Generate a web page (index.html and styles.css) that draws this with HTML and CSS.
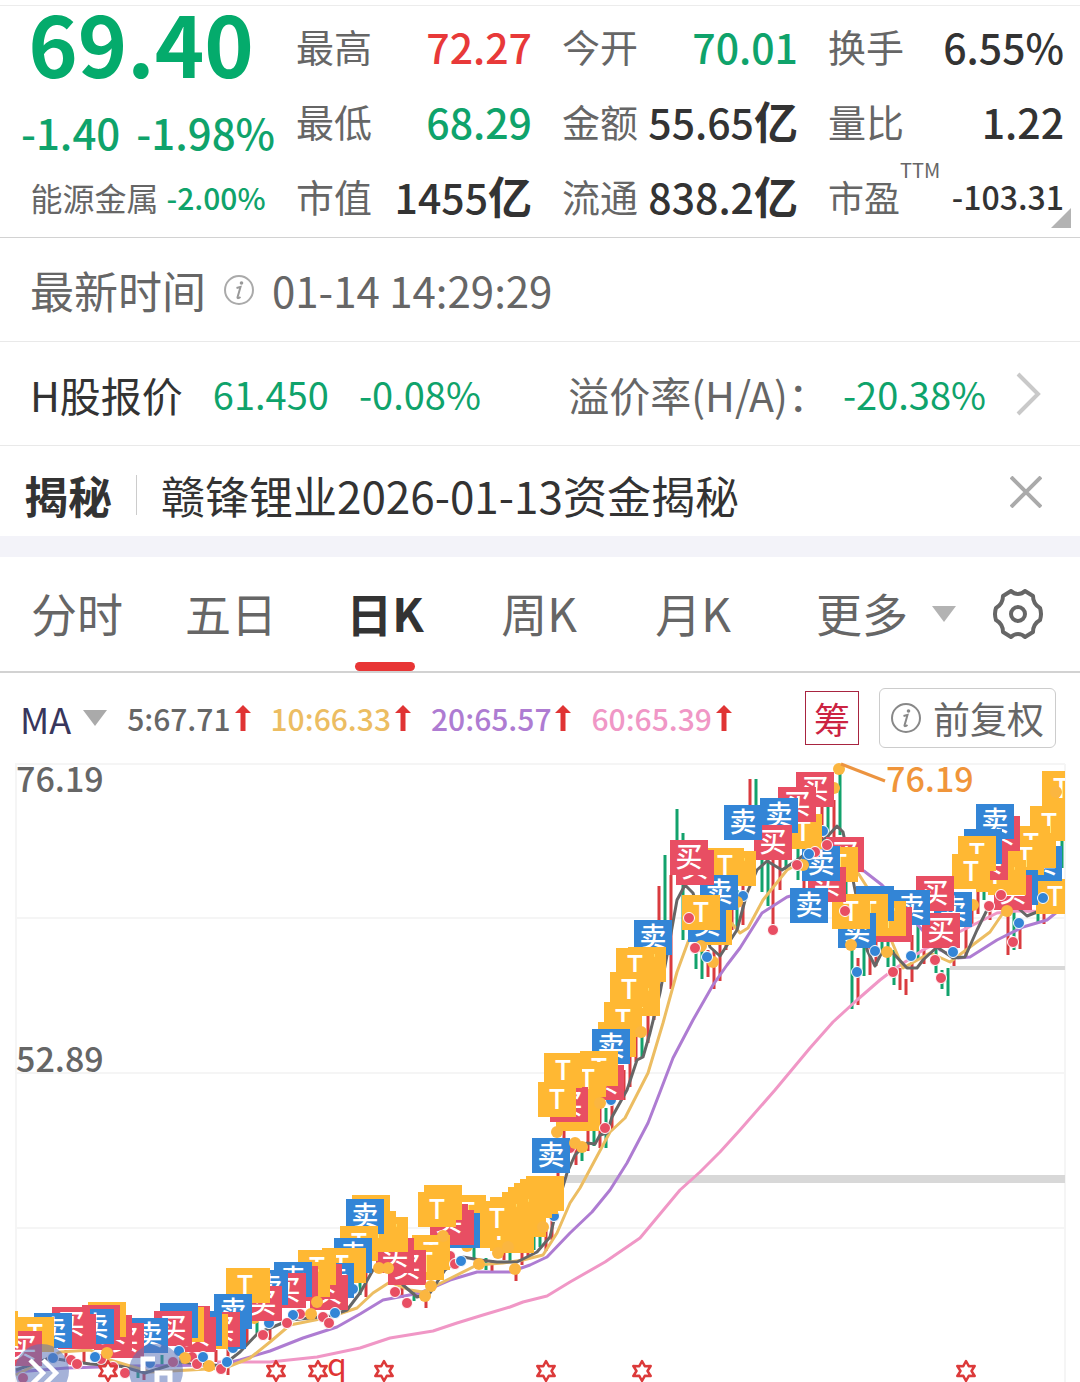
FILE: index.html
```html
<!DOCTYPE html>
<html lang="zh-CN">
<head>
<meta charset="utf-8">
<meta name="viewport" content="width=device-width, initial-scale=1">
<title>赣锋锂业</title>
<link rel="stylesheet" href="styles.css">
</head>
<body>
<header class="quote">
  <div class="quote-main">
    <div class="price">69.40</div>
    <div class="change"><span>-1.40</span><span>-1.98%</span></div>
    <div class="sector"><span>能源金属</span><span class="sector-change">-2.00%</span></div>
  </div>
  <dl class="stats">
    <div class="stat"><dt>最高</dt><dd class="up">72.27</dd></div>
    <div class="stat"><dt>今开</dt><dd class="down">70.01</dd></div>
    <div class="stat"><dt>换手</dt><dd>6.55%</dd></div>
    <div class="stat"><dt>最低</dt><dd class="down">68.29</dd></div>
    <div class="stat"><dt>金额</dt><dd>55.65<b>亿</b></dd></div>
    <div class="stat"><dt>量比</dt><dd>1.22</dd></div>
    <div class="stat"><dt>市值</dt><dd>1455<b>亿</b></dd></div>
    <div class="stat"><dt>流通</dt><dd>838.2<b>亿</b></dd></div>
    <div class="stat"><dt class="narrow">市盈<sup>TTM</sup></dt><dd class="small">-103.31</dd></div>
  </dl>
  <svg class="corner" viewBox="0 0 20 20" aria-hidden="true"><path d="M20 0V20H0z" fill="#b3b3b3"/></svg>
</header>

<section class="row time-row">
  <span>最新时间</span>
  <svg class="info" viewBox="0 0 30 30" aria-hidden="true"><circle cx="15" cy="15" r="14" fill="none" stroke="#aaa" stroke-width="2"/><circle cx="17.500" cy="8" r="1.800" fill="#999"/><path d="M12.500 13l4-1-3 10.500q0 1.500 3-.5" fill="none" stroke="#999" stroke-width="2"/></svg>
  <time>01-14 14:29:29</time>
</section>

<a class="row hshare" href="#hshare">
  <span class="hshare-name">H股报价</span>
  <span class="down">61.450</span>
  <span class="down hshare-change">-0.08%</span>
  <span class="premium">溢价率(H/A)：</span>
  <span class="down premium-value">-20.38%</span>
  <svg class="chevron" viewBox="0 0 26 44" aria-hidden="true"><path d="M2 2l20 20L2 42" fill="none" stroke="#c9c9c9" stroke-width="4"/></svg>
</a>

<section class="row news">
  <strong>揭秘</strong>
  <a href="#news">赣锋锂业2026-01-13资金揭秘</a>
  <button class="close" aria-label="关闭"><svg viewBox="0 0 32 32" aria-hidden="true"><path d="M1 1l30 30M31 1L1 31" stroke="#aaa" stroke-width="4"/></svg></button>
</section>

<nav class="tabs">
  <button>分时</button>
  <button>五日</button>
  <button class="active">日K</button>
  <button>周K</button>
  <button>月K</button>
  <button class="more">更多<svg class="tri" viewBox="0 0 24 16" aria-hidden="true"><path d="M0 0H24L12 16z" fill="#b3b3b3"/></svg></button>
  <button class="settings" aria-label="设置">
    <svg viewBox="0 0 50 50" aria-hidden="true"><g fill="none" stroke="#666" stroke-width="4" stroke-linejoin="round"><path d="M18 2Q21 5 25 5T32 2L40 7Q40 15 47 19Q49 25 47 31Q40 35 40 43L32 48Q29 45 25 45T18 48L10 43Q10 35 3 31Q1 25 3 19Q10 15 10 7z"/><circle cx="25" cy="25" r="7"/></g></svg>
  </button>
</nav>

<section class="indicators">
  <button class="ma">MA<svg class="tri" viewBox="0 0 24 16" aria-hidden="true"><path d="M0 0H24L12 16z" fill="#aaa"/></svg></button>
  <span class="line ma5">5:67.71<svg viewBox="0 0 16 26" aria-hidden="true"><path d="M8 0l8 8h-5.500v18h-5V8H0z"/></svg></span>
  <span class="line ma10">10:66.33<svg viewBox="0 0 16 26" aria-hidden="true"><path d="M8 0l8 8h-5.500v18h-5V8H0z"/></svg></span>
  <span class="line ma20">20:65.57<svg viewBox="0 0 16 26" aria-hidden="true"><path d="M8 0l8 8h-5.500v18h-5V8H0z"/></svg></span>
  <span class="line ma60">60:65.39<svg viewBox="0 0 16 26" aria-hidden="true"><path d="M8 0l8 8h-5.500v18h-5V8H0z"/></svg></span>
  <button class="chips">筹</button>
  <button class="adjust"><svg class="info" viewBox="0 0 30 30" aria-hidden="true"><circle cx="15" cy="15" r="14" fill="none" stroke="#888" stroke-width="2"/><circle cx="17.500" cy="8" r="1.800" fill="#888"/><path d="M12.500 13l4-1-3 10.500q0 1.500 3-.5" fill="none" stroke="#888" stroke-width="2"/></svg>前复权</button>
</section>

<svg class="chart" id="chart" viewBox="0 756 1080 626" role="img" aria-label="日K线图"></svg>
<script src="chart.js"></script>
</body>
</html>
```
FILE: styles.css
```css
* { box-sizing: border-box; }
body {
  margin: 0;
  padding-top: 5px;
  background: #fff;
  color: #333;
  font-family: "Noto Sans CJK SC", sans-serif;
  overflow-x: hidden;
}
button {
  margin: 0;
  padding: 0;
  border: 0;
  background: none;
  color: inherit;
  font: inherit;
}
a { color: inherit; text-decoration: none; }
svg { display: block; flex: none; }
.up { color: #e83939; }
.down { color: #0fa36b; }

.quote {
  position: relative;
  display: grid;
  grid-template-columns: 296fr 784fr;
  border-top: 1px solid #ececec;
  border-bottom: 1px solid #d2d2d2;
}
.quote-main {
  display: flex;
  flex-direction: column;
  align-items: center;
  color: #0fa36b;
  white-space: nowrap;
}
.price { font-size: 84px; font-weight: 700; line-height: 72px; color: #04ab6c; margin-right: 14px; }
.change { display: flex; gap: 16px; margin-top: 24px; font-size: 42px; font-weight: 500; line-height: 60px; }
.sector { display: flex; gap: 8px; margin-top: 12px; font-size: 32px; line-height: 46px; color: #666; }
.sector-change { font-size: 30px; font-weight: 500; color: #0fa36b; }

.stats {
  display: grid;
  grid-template-columns: repeat(3, 1fr);
  column-gap: 30px;
  margin: 0;
  padding: 2px 16px 4px 0;
}
.stat { display: flex; align-items: center; justify-content: space-between; height: 75px; white-space: nowrap; }
.stat dt { display: flex; font-size: 38px; line-height: 50px; color: #666; }
.stat dt.narrow { font-size: 36px; }
.stat dd { margin: 0; font-size: 41px; font-weight: 500; line-height: 60px; }
.stat dd b { font-size: 44px; font-weight: 700; line-height: 60px; }
.stat dd.small { font-size: 32px; }
.stat sup { align-self: flex-start; margin-top: -16px; font-size: 20px; line-height: 30px; }
.corner { position: absolute; right: 9px; bottom: 9px; width: 20px; height: 20px; }

.row { display: flex; align-items: center; border-bottom: 1px solid #e9e9e9; white-space: nowrap; }
.info { width: 30px; height: 30px; }
.time-row { height: 104px; padding: 0 30px; gap: 18px; font-size: 44px; color: #666; }
.time-row time { font-size: 42px; }
.hshare { height: 104px; padding: 0 38px 0 30px; font-size: 38px; }
.hshare-name { margin-right: 30px; font-size: 41px; }
.hshare-change { margin-left: 30px; }
.premium { margin-left: auto; font-size: 41px; color: #666; }
.premium-value { margin: 0 30px 0 14px; }
.chevron { width: 26px; height: 44px; }
.news { height: 111px; padding: 8px 38px 0 24px; border-bottom: 21px solid #f3f3f9; font-size: 44px; }
.news strong { padding-right: 24px; border-right: 1px solid #ccc; line-height: 40px; }
.news a { margin-left: 24px; }
.close { margin: 0 0 6px auto; }
.close svg { width: 32px; height: 32px; }

.tabs {
  display: grid;
  grid-template-columns: repeat(5, 154fr) 216fr 94fr;
  height: 116px;
  border-bottom: 2px solid #d2d2d2;
  font-size: 46px;
  color: #666;
}
.tabs button { padding-bottom: 4px; }
.tabs .active { position: relative; color: #333; font-weight: 700; }
.tabs .active::after {
  content: "";
  position: absolute;
  left: 50%;
  bottom: 0;
  width: 60px;
  height: 9px;
  margin-left: -30px;
  border-radius: 5px;
  background: #e83535;
}
.tri { width: 24px; height: 16px; }
.tabs .more { display: flex; align-items: center; gap: 24px; padding-left: 46px; }
.more .tri { margin-top: 4px; }
.tabs .settings { padding: 0 0 0 7px; }
.settings svg { width: 50px; height: 50px; }

.indicators { display: flex; align-items: center; gap: 20px; height: 83px; padding: 6px 24px 0 20px; font-size: 30px; line-height: 44px; white-space: nowrap; }
.ma { display: flex; align-items: center; gap: 12px; font-size: 36px; color: #38365c; }
.line { display: flex; align-items: center; gap: 4px; font-weight: 500; }
.line svg { width: 16px; height: 26px; fill: #e03434; }
.ma5 { color: #666; }
.ma10 { color: #ecbd62; }
.ma20 { color: #ae7cd2; }
.ma60 { color: #f097c6; }
.chips { width: 54px; height: 54px; margin-left: auto; border: 1px solid #a82440; color: #cc2342; font-size: 36px; }
.adjust { display: flex; align-items: center; justify-content: center; gap: 12px; width: 177px; height: 60px; border: 1px solid #ccc; border-radius: 6px; color: #666; font-size: 37px; }

.chart { width: 100%; height: auto; }
.chart text { font-family: "Noto Sans CJK SC", sans-serif; }
.axis-label { font-size: 34px; fill: #666; font-weight: 500; }
.peak-label { font-size: 34px; fill: #f0953a; font-weight: 500; }
.tag-label { font-size: 27px; fill: #fff; text-anchor: middle; font-weight: 500; }
.event-label { font-size: 32px; fill: #e03434; }
```
FILE: chart.js
```js
const svg = document.getElementById('chart');
const NS = 'http://www.w3.org/2000/svg';
function add(name, attrs, parent = svg, text) {
  const el = document.createElementNS(NS, name);
  for (const key in attrs) el.setAttribute(key, attrs[key]);
  if (text) el.textContent = text;
  parent.appendChild(el);
  return el;
}
const COLORS = { R: '#e84e63', B: '#3385d6', Y: '#ffb833', r: '#d93b3f', g: '#12a26c' };
const LABELS = { R: '买', B: '卖', Y: 'T' };

const clip = add('clipPath', { id: 'plot' });
add('rect', { x: 15, y: 756, width: 1050, height: 626 }, clip);

/* grid */
for (const y of [764, 918, 1073, 1228]) add('path', { d: `M15 ${y}H1065`, stroke: '#f5f5f5', 'stroke-width': 2 });
for (const x of [16, 1065]) add('path', { d: `M${x} 764V1382`, stroke: '#f5f5f5', 'stroke-width': 2 });
add('rect', { x: 565, y: 1175, width: 500, height: 8, fill: '#d8d8d8' });
add('rect', { x: 950, y: 966, width: 115, height: 4, fill: '#d8d8d8' });

const plot = add('g', { 'clip-path': 'url(#plot)' });

/* candles: x, high, low, direction */
const candles = [
  [659,886,930,'r'],[665,855,930,'g'],[671,875,989,'r'],[677,809,850,'g'],[683,833,940,'g'],[696,945,969,'g'],[702,945,979,'g'],[708,950,977,'r'],[714,950,989,'r'],[720,940,981,'r'],[726,930,950,'r'],
  [732,900,930,'r'],[737,890,930,'g'],[743,880,925,'r'],[750,779,830,'r'],[756,779,830,'g'],[762,860,892,'g'],[768,860,906,'g'],[773,860,926,'r'],[780,860,890,'r'],[786,850,870,'g'],[798,840,880,'g'],[804,840,888,'r'],
  [822,790,840,'r'],[828,800,840,'g'],[834,800,840,'r'],[840,770,835,'g'],[846,870,910,'g'],[852,945,1009,'g'],[858,958,1005,'r'],[864,940,976,'g'],[870,940,975,'r'],[876,940,966,'r'],[882,940,952,'g'],
  [888,940,967,'g'],[894,950,985,'g'],[900,968,990,'r'],[906,979,995,'r'],[912,935,982,'r'],[918,925,960,'g'],[924,950,964,'r'],[936,947,973,'g'],[942,970,989,'g'],[948,968,996,'g'],[954,948,966,'r'],
  [966,920,957,'r'],[972,900,925,'r'],[978,890,914,'r'],[984,888,900,'g'],[990,910,920,'r'],[1008,912,955,'r'],[1014,910,950,'g'],[1020,925,949,'r'],[1038,910,922,'g'],[1044,910,924,'r'],[1062,840,868,'g'],
  [654,990,1020,'r'],[648,1010,1043,'r'],[642,1030,1057,'g'],[636,1030,1062,'r'],[630,1055,1087,'r'],[624,1070,1100,'r'],[612,1105,1130,'r'],[606,1108,1148,'g'],[600,1108,1148,'r'],[594,1125,1146,'g'],[588,1125,1151,'r'],[582,1150,1161,'g'],[576,1148,1165,'r'],[564,1130,1140,'r'],
  [558,1170,1180,'r'],[552,1210,1240,'r'],[546,1225,1251,'r'],[540,1230,1247,'g'],[534,1232,1250,'g'],[528,1240,1257,'r'],[522,1250,1265,'r'],[516,1270,1281,'r'],[510,1250,1262,'g'],[504,1250,1260,'r'],[492,1260,1271,'r'],[486,1258,1270,'g'],[474,1245,1258,'g'],
  [426,1296,1308,'r'],[414,1290,1301,'g'],[402,1288,1298,'r'],[366,1270,1297,'r'],[360,1275,1295,'g'],[270,1320,1340,'r'],[257,1322,1333,'g'],[247,1325,1345,'r'],[228,1345,1375,'r'],[216,1350,1362,'r'],[198,1355,1366,'g'],[162,1355,1368,'g'],[144,1362,1380,'r'],[138,1365,1378,'g'],[84,1350,1364,'r'],[66,1350,1362,'r']
];
for (const [x, y1, y2, c] of candles) add('rect', { x: x - 1.5, y: y1, width: 3, height: y2 - y1, fill: COLORS[c] }, plot);

/* moving averages */
const averages = {
  '#f097c6': '217,1362 270,1362 317,1357 360,1348 390,1338 433,1331 457,1323 483,1315 510,1307 523,1302 547,1296 570,1282 605,1262 640,1238 660,1214 680,1190 700,1172 720,1152 740,1130 775,1090 810,1048 833,1022 857,1000 880,980 893,970 923,950 963,930 997,913 1017,911 1065,912',
  '#ae7cd2': '16,1372 67,1368 133,1366 217,1365 240,1360 270,1351 303,1338 337,1327 360,1314 383,1300 420,1293 450,1280 477,1272 510,1272 530,1265 547,1257 570,1233 592,1212 610,1190 627,1163 648,1123 660,1092 673,1058 693,1020 713,985 727,965 740,948 762,913 787,897 820,888 845,868 864,871 882,885 900,905 940,950 958,958 970,957 997,940 1023,927 1047,920 1057,912',
  '#ecbd62': '16,1375 60,1352 90,1350 110,1360 150,1372 190,1370 225,1368 250,1358 270,1342 290,1325 330,1317 357,1308 373,1293 390,1282 410,1290 423,1292 447,1280 477,1265 503,1263 523,1260 543,1255 557,1233 570,1203 580,1188 610,1132 625,1118 648,1073 663,1023 677,972 688,942 705,910 720,910 740,933 748,928 763,900 787,870 800,863 830,848 858,873 867,887 892,942 903,968 930,953 950,962 970,947 990,932 1003,913 1030,895',
  '#666': '16,1370 50,1358 90,1364 120,1366 145,1373 180,1362 222,1366 240,1352 258,1333 290,1320 330,1316 347,1310 360,1293 373,1270 385,1268 403,1285 417,1297 430,1293 445,1270 463,1257 480,1260 497,1262 517,1262 537,1252 550,1237 558,1203 567,1173 575,1155 587,1143 595,1144 600,1135 607,1133 612,1117 627,1090 637,1060 643,1057 650,1033 660,993 668,950 677,900 685,885 693,893 710,947 720,956 737,930 747,893 757,870 767,861 782,870 800,858 820,843 827,837 837,826 843,832 853,880 867,950 875,966 883,950 892,952 907,968 917,968 923,960 937,947 953,958 965,957 977,930 987,910 1005,900 1018,908 1027,916 1037,912 1062,890'
};
for (const color in averages) add('polyline', { points: averages[color], fill: 'none', stroke: color, 'stroke-width': 3, 'stroke-linejoin': 'round' }, plot);

function dots(list) {
  for (const [x, y, c] of list) {
    add('circle', c === 'Y' ? { cx: x, cy: y, r: 6, fill: '#fbb640' } : { cx: x, cy: y, r: 5.5, fill: COLORS[c], stroke: '#fff', 'stroke-width': 1 }, plot);
  }
}

/* signals partly hidden by the tags */
dots([[233,1348,'B'],[269,1323,'B'],[353,1289,'B'],[450,1256,'R'],[570,1148,'R'],[611,1100,'B'],[823,831,'B'],[834,788,'Y'],[743,896,'B'],[737,902,'Y'],[973,905,'Y'],[192,1357,'R'],[554,1216,'B'],[467,1246,'Y'],[254,1318,'Y']]);

/* trade tags: x, y, kind; the earlier day lies over the later one */
const tags = [
  [-20,1311,'Y'],[4,1331,'R'],[16,1317,'Y'],[34,1313,'B'],[52,1307,'R'],[58,1314,'R'],[76,1309,'B'],[82,1305,'R'],[88,1302,'Y'],[94,1315,'R'],[106,1323,'R'],[130,1318,'B'],
  [154,1311,'R'],[160,1303,'B'],[166,1307,'Y'],[172,1306,'R'],[178,1317,'R'],[184,1311,'B'],[190,1314,'Y'],[202,1312,'R'],[208,1314,'B'],[214,1294,'B'],[226,1268,'Y'],[232,1268,'Y'],
  [244,1286,'R'],[250,1270,'B'],[268,1273,'R'],[274,1262,'B'],[280,1266,'R'],[292,1262,'Y'],[298,1250,'Y'],[304,1264,'R'],[310,1275,'R'],[316,1263,'B'],[322,1248,'Y'],[328,1248,'Y'],[334,1238,'B'],[340,1226,'Y'],
  [346,1199,'B'],[352,1195,'Y'],[358,1211,'Y'],[370,1217,'Y'],[376,1238,'R'],[388,1250,'R'],[406,1245,'Y'],[412,1235,'Y'],[418,1192,'Y'],[424,1185,'Y'],[430,1204,'R'],[436,1210,'R'],[442,1213,'B'],[448,1195,'Y'],
  [478,1201,'Y'],[480,1213,'Y'],[490,1197,'Y'],[496,1218,'Y'],[490,1216,'Y'],[502,1192,'Y'],[508,1187,'Y'],[508,1202,'Y'],[514,1183,'Y'],[520,1179,'Y'],[526,1176,'Y'],
  [532,1138,'B'],[538,1082,'Y'],[544,1053,'Y'],[550,1087,'R'],[556,1096,'Y'],[562,1096,'Y'],[568,1062,'Y'],[580,1051,'Y'],[586,1065,'R'],[592,1029,'B'],[598,1022,'Y'],[604,1002,'Y'],[610,972,'Y'],[616,948,'Y'],[622,981,'Y'],[628,947,'Y'],[634,920,'B'],
  [670,840,'R'],[676,850,'R'],[682,895,'Y'],[688,907,'B'],[694,910,'Y'],[700,875,'B'],[706,848,'Y'],[718,851,'Y'],[724,805,'B'],[754,825,'R'],[760,798,'B'],[778,787,'R'],[784,814,'Y'],[796,772,'R'],
  [790,888,'B'],[802,846,'B'],[808,867,'R'],[820,847,'Y'],[826,837,'R'],[832,894,'Y'],[838,913,'B'],[850,894,'Y'],[856,886,'B'],[868,901,'Y'],[874,907,'R'],[892,890,'B'],[916,876,'R'],[922,913,'R'],[934,892,'B'],
  [952,854,'Y'],[958,836,'Y'],[964,829,'B'],[970,845,'R'],[976,804,'B'],[982,816,'R'],[976,857,'Y'],[988,860,'Y'],[994,875,'R'],[1000,870,'B'],[1006,840,'Y'],[1012,826,'Y'],[1018,833,'Y'],[1024,846,'B'],[1030,806,'Y'],[1036,879,'Y'],[1042,771,'Y']
];
tags.sort((a, b) => b[0] - a[0]);

/* a label is dropped when one later tag covers nearly all of it */
function covered(i) {
  const [x, y] = tags[i];
  if (x < 0) return true;
  return tags.slice(i + 1).some(([u, v]) => {
    const w = Math.min(x + 31, u + 38) - Math.max(x + 7, u);
    const h = Math.min(y + 30, v + 35) - Math.max(y + 4, v);
    return w > 0 && h > 0 && w * h > 24 * 26 * 0.83;
  });
}
tags.forEach(([x, y, kind], i) => {
  add('rect', { x, y, width: 38, height: 35, fill: COLORS[kind] }, plot);
  if (!covered(i)) add('text', { x: x + 19, y: y + 27, class: 'tag-label' }, plot, LABELS[kind]);
});

dots([[53,1358,'B'],[71,1360,'R'],[77,1364,'R'],[101,1359,'R'],[95,1357,'B'],[107,1353,'Y'],[113,1367,'R'],[125,1373,'R'],[150,1363,'B'],[173,1362,'R'],[179,1351,'B'],[185,1358,'Y'],[197,1364,'R'],[203,1357,'B'],[209,1366,'Y'],[221,1369,'R'],[227,1362,'B'],[263,1335,'R'],[23,1378,'R'],
  [300,1314,'R'],[293,1315,'B'],[287,1323,'R'],[311,1314,'Y'],[323,1317,'R'],[329,1323,'R'],[335,1313,'B'],[317,1302,'Y'],[379,1268,'Y'],[388,1268,'Y'],[395,1292,'R'],[407,1303,'R'],[431,1286,'Y'],[425,1296,'Y'],[455,1264,'R'],[461,1261,'B'],[443,1236,'Y'],[479,1264,'Y'],[515,1269,'Y'],[498,1253,'Y'],[508,1247,'Y'],[543,1227,'Y'],
  [557,1132,'Y'],[575,1143,'Y'],[582,1147,'Y'],[605,1128,'R'],[600,1103,'Y'],[641,1032,'Y'],[689,918,'R'],[701,946,'Y'],[695,948,'R'],[713,962,'Y'],[707,957,'B'],[773,930,'R'],[803,865,'Y'],[797,865,'R'],[815,852,'R'],[809,854,'B'],[827,845,'R'],[839,769,'Y'],[845,911,'R'],[851,945,'Y'],[857,972,'B'],[875,951,'B'],
  [887,952,'Y'],[911,956,'B'],[893,972,'R'],[935,960,'R'],[941,978,'R'],[953,952,'B'],[989,906,'R'],[1001,895,'R'],[1007,911,'Y'],[1013,942,'R'],[1019,923,'B'],[1043,898,'B'],[1056,792,'Y']]);

/* peak marker and axis labels */
add('path', { d: 'M841 764L885 781', stroke: '#ec9440', 'stroke-width': 3 });
add('text', { x: 886, y: 792, class: 'peak-label' }, svg, '76.19');
add('text', { x: 16, y: 792, class: 'axis-label' }, svg, '76.19');
add('text', { x: 16, y: 1072, class: 'axis-label' }, svg, '52.89');

/* events on the time axis */
for (const x of [108, 276, 318, 384, 546, 642, 966]) {
  let d = '';
  for (let i = 0; i < 12; i++) {
    const r = i % 2 ? 5.5 : 10;
    const a = i * Math.PI / 6;
    d += `${i ? 'L' : 'M'}${(x + r * Math.sin(a)).toFixed(1)} ${(1371 - r * Math.cos(a)).toFixed(1)}`;
  }
  add('path', { d: d + 'z', fill: '#fff', stroke: '#dc3a3a', 'stroke-width': 2.5, 'stroke-linejoin': 'round' }, plot);
}
add('text', { x: 327, y: 1376, class: 'event-label' }, svg, 'q');

/* round controls over the plot */
add('circle', { cx: 42, cy: 1371, r: 27, fill: '#5b72b8', opacity: 0.55 }, plot);
add('path', { d: 'M30 1360l13 13-13 13M43 1360l13 13-13 13', fill: 'none', stroke: '#fff', 'stroke-width': 4.5 }, plot);
add('circle', { cx: 156, cy: 1371, r: 27, fill: '#5b72b8', opacity: 0.55 }, plot);
add('path', { d: 'M143 1371V1359H155M157 1382V1373H170V1386', fill: 'none', stroke: '#fff', 'stroke-width': 5 }, plot);
```
